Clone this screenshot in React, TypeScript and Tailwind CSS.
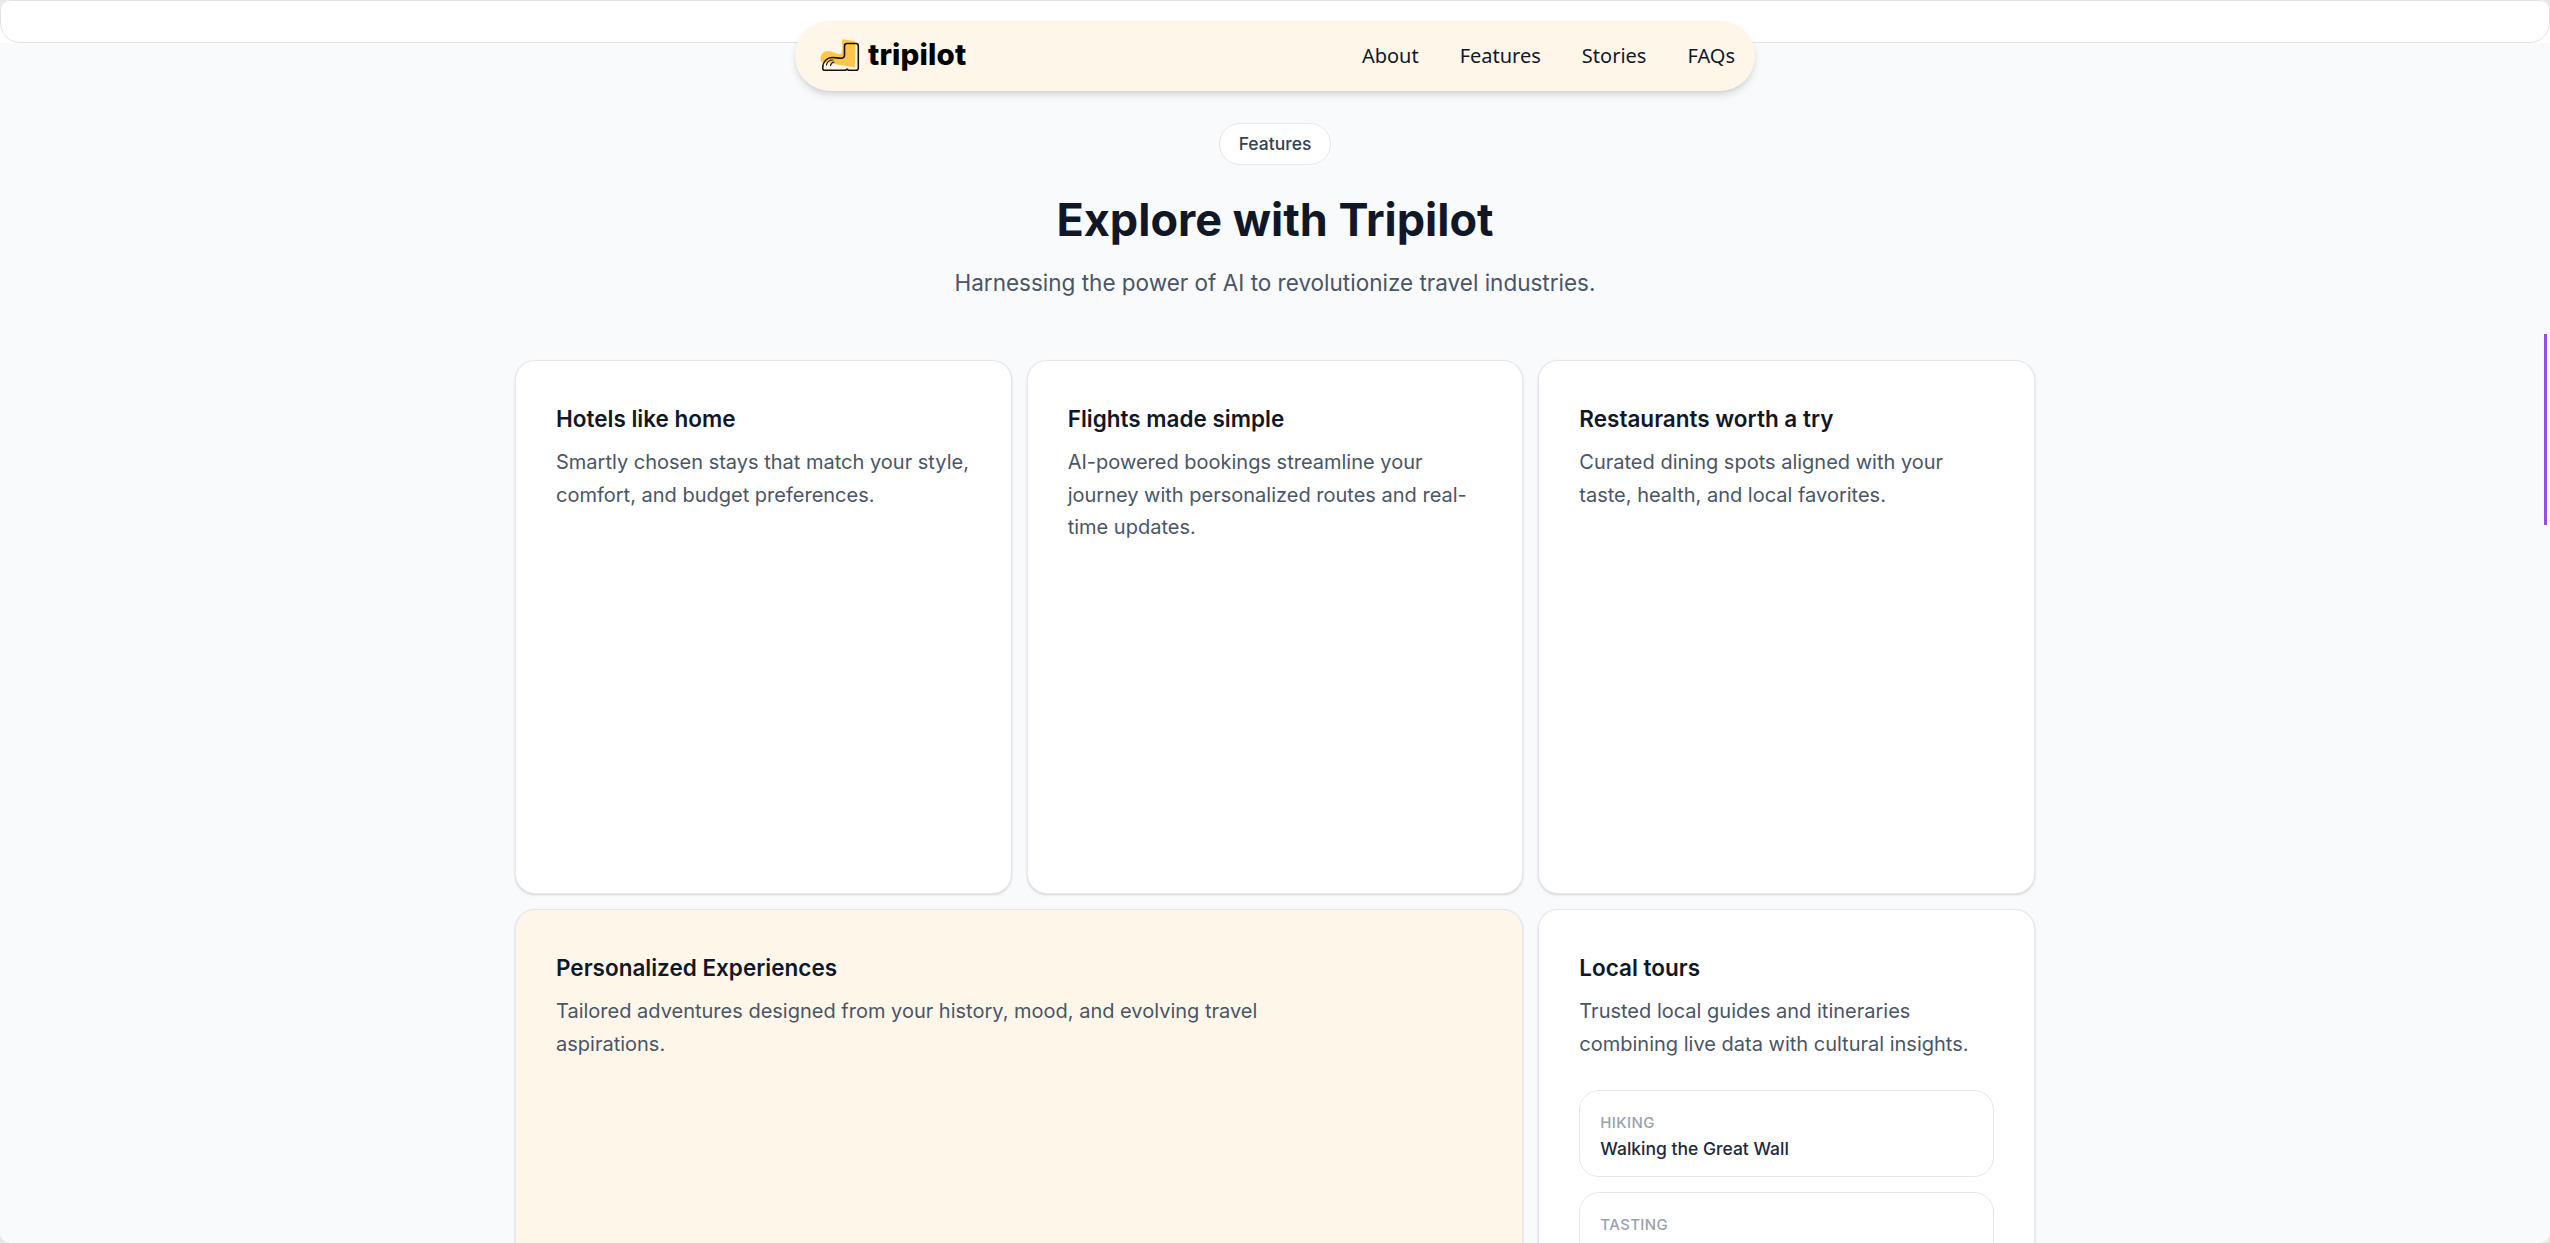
const NAV_LINKS = ["About", "Features", "Stories", "FAQs"];

const TOP_CARDS = [
  { title: "Hotels like home", text: "Smartly chosen stays that match your style, comfort, and budget preferences." },
  { title: "Flights made simple", text: "AI-powered bookings streamline your journey with personalized routes and real-time updates." },
  { title: "Restaurants worth a try", text: "Curated dining spots aligned with your taste, health, and local favorites." },
];

const TOURS: { kind: string; name?: string }[] = [
  { kind: "Hiking", name: "Walking the Great Wall" },
  { kind: "Tasting" },
];

const CARD = "rounded-[20px] border border-gray-200 px-10 pt-10 shadow-[0_1px_3px_rgba(0,0,0,0.1),0_1px_2px_rgba(0,0,0,0.06)]";

function BootLogo() {
  return (
    <svg width="40" height="34" viewBox="0 0 40 34" fill="none">
      <path
        d="M1 23C-.5 16 3 12 8 12c5 0 7 3 12 3 2 0 3-3 2-10V3c0-2 .5-3 2.500-2.500L34 2c1.200.4 1.500 1.500 1.500 3L35 28.500 17 25.500 8 23.500Z"
        fill="#ffc64a"
      />
      <path
        d="M24.500 7c0-1.700 1-2.500 2.500-2.500H36c1.700 0 2.300.8 2.300 2.500v22c0 1.700-.6 2.300-2.300 2.300h-7.500l-1.500-1.300-1.500 1.300H5c-1.700 0-2.300-.8-2.300-2.500C3 22.500 7 18.500 13 18.500c3 0 4 .8 8 .8 2.700 0 3.500-.8 3.500-3.300V7Z"
        stroke="#16120d"
        strokeWidth="1.600"
        strokeLinejoin="round"
      />
      <path d="M6.500 26c.5-3.200 3-5 6.500-5M10.500 26.500c.5-2.200 1.500-3.200 3.500-3.500" stroke="#16120d" strokeWidth="1.200" strokeLinecap="round" />
    </svg>
  );
}

function CardText({ title, text, wide = false }: { title: string; text: string; wide?: boolean }) {
  return (
    <div className={wide ? "max-w-[720px]" : ""}>
      <h3 className="text-[22.5px] leading-9 font-semibold text-gray-900">{title}</h3>
      <p className="mt-[9px] text-[20px] leading-[32.5px] text-gray-600">{text}</p>
    </div>
  );
}

export default function App() {
  return (
    <div className="h-[1243px] overflow-hidden bg-[#e8e8e8] font-['Inter',sans-serif]">
      <div className="relative h-full overflow-hidden rounded-[10px] bg-[#f9fafc]">
        {/* tail of the previous section */}
        <div className="h-[43px] bg-white">
          <div className="h-full rounded-t-[10px] rounded-b-[20px] border border-[#e2e2e4] bg-white" />
        </div>

        <nav className="absolute top-[21px] left-1/2 flex h-[70px] w-[960px] -translate-x-1/2 items-center justify-between rounded-full bg-[#fff6ea] pr-5 pl-[25px] shadow-[0_5px_8px_-1px_rgba(0,0,0,0.12),0_2px_5px_-2px_rgba(0,0,0,0.12)]">
          <div className="flex items-center gap-2">
            <BootLogo />
            <span className="pb-[2px] text-[29.5px] leading-none font-extrabold tracking-[0.15px] text-black">tripilot</span>
          </div>
          <div className="flex gap-[41px] font-['Noto_Sans',sans-serif] text-[20px] text-gray-900">
            {NAV_LINKS.map((l) => (
              <a key={l} href="#">{l}</a>
            ))}
          </div>
        </nav>

        <section className="flex flex-col items-center pt-20">
          <span className="flex h-[42px] items-center rounded-full border border-gray-200 bg-white px-[19px] text-[17.5px] font-medium text-gray-700">
            Features
          </span>
          <h2 className="mt-[25px] text-[45px] leading-[60px] font-bold text-gray-900">Explore with Tripilot</h2>
          <p className="mt-[15px] text-[22.5px] leading-9 text-gray-600">
            Harnessing the power of AI to revolutionize travel industries.
          </p>

          <div className="mt-[59px] grid w-[1520px] grid-cols-3 gap-[15px]">
            {TOP_CARDS.map((c) => (
              <div key={c.title} className={CARD + " h-[534px] bg-white"}>
                <CardText title={c.title} text={c.text} />
              </div>
            ))}
            <div className={CARD + " col-span-2 h-[534px] bg-[#fff6ea]"}>
              <CardText
                wide
                title="Personalized Experiences"
                text="Tailored adventures designed from your history, mood, and evolving travel aspirations."
              />
            </div>
            <div className={CARD + " h-[534px] bg-white"}>
              <CardText title="Local tours" text="Trusted local guides and itineraries combining live data with cultural insights." />
              <ul className="mt-[30px] flex flex-col gap-[15px]">
                {TOURS.map((t) => (
                  <li key={t.kind} className="h-[87px] rounded-[20px] border border-gray-200 px-5 pt-[19px]">
                    <p className="text-[15px] leading-[26px] font-medium tracking-wide text-gray-400 uppercase">{t.kind}</p>
                    {t.name && <p className="text-[17.5px] leading-[26px] font-medium text-gray-800">{t.name}</p>}
                  </li>
                ))}
              </ul>
            </div>
          </div>
        </section>

        {/* scroll indicator */}
        <div className="absolute top-[334px] right-[3px] h-[191px] w-[3px] bg-[#9b4de0]" />
      </div>
    </div>
  );
}
